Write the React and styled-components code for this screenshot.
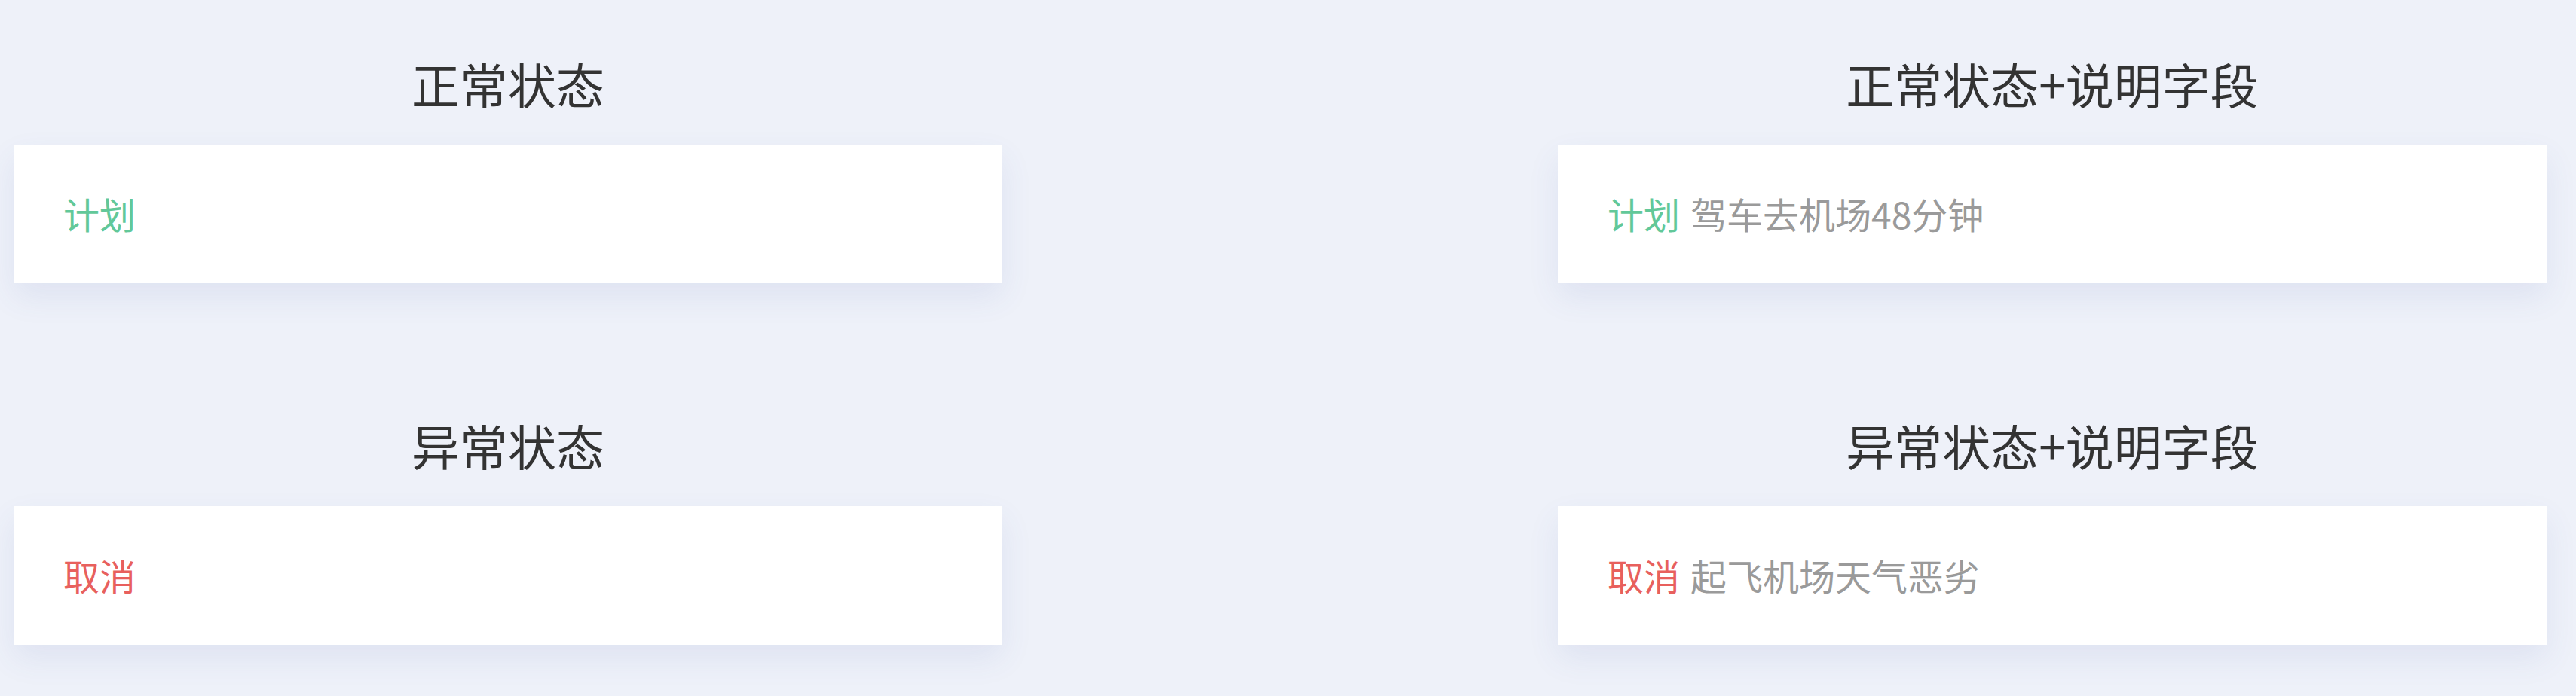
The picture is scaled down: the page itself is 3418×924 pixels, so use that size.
import styled, { createGlobalStyle } from "styled-components";

const GlobalStyle = createGlobalStyle`
  html, body {
    margin: 0;
    padding: 0;
    background-color: #eef1f9;
  }
  body {
    font-family: "Noto Sans CJK SC", "Noto Sans", sans-serif;
  }
`;

// 전체 페이지
const Page = styled.div`
  min-height: 924px;
  padding: 78px 0 0 18px;
  box-sizing: border-box;
  display: grid;
  grid-template-columns: 1312px 1312px;
  column-gap: 737px;
  row-gap: 182px;
  align-content: start;
`;

const Section = styled.section`
  display: flex;
  flex-direction: column;
  gap: 50px;
`;

const Title = styled.h2`
  margin: 0;
  height: 64px;
  line-height: 64px;
  font-size: 64px;
  font-weight: 400;
  color: #333333;
  text-align: center;
`;

const Card = styled.div`
  box-sizing: border-box;
  height: 184px;
  background-color: #ffffff;
  box-shadow: 0 18px 40px rgba(70, 90, 170, 0.09);
  display: flex;
  align-items: center;
  gap: 14px;
  padding: 0 66px 2px;
  font-size: 48px;
  line-height: 48px;
`;

const Status = styled.span`
  color: ${(p) => (p.$error ? "#e8605d" : "#62c899")};
`;

const Note = styled.span`
  color: #9a9a9a;
`;

const items = [
  { title: "正常状态", status: "计划" },
  { title: "正常状态+说明字段", status: "计划", note: "驾车去机场48分钟" },
  { title: "异常状态", status: "取消", error: true },
  { title: "异常状态+说明字段", status: "取消", note: "起飞机场天气恶劣", error: true },
];

const App = () => {
  return (
    <>
      <GlobalStyle />
      <Page>
        {items.map((item) => (
          <Section key={item.title}>
            <Title>{item.title}</Title>
            <Card>
              <Status $error={item.error}>{item.status}</Status>
              {item.note && <Note>{item.note}</Note>}
            </Card>
          </Section>
        ))}
      </Page>
    </>
  );
};

export default App;
